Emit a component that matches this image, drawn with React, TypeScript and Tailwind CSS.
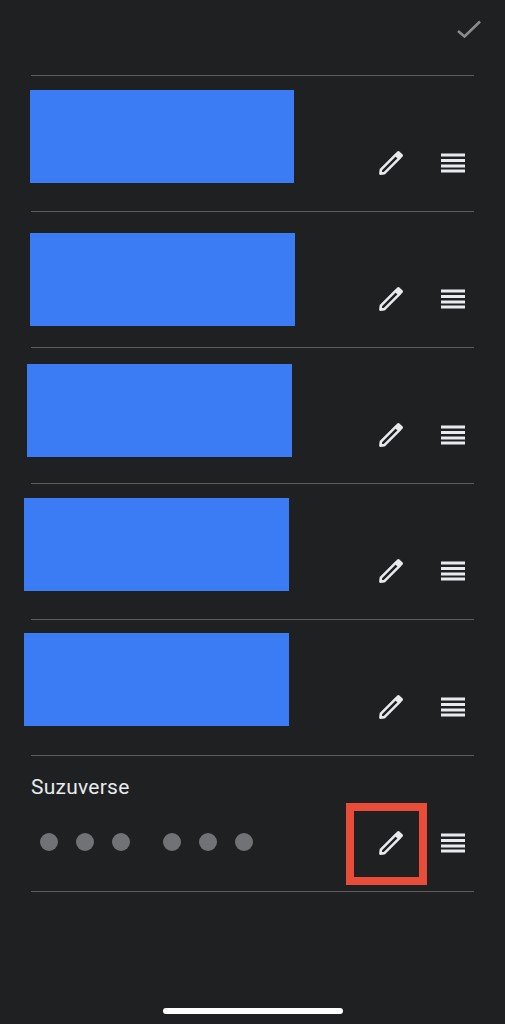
const PencilIcon = () => (
  <svg width="26" height="26" viewBox="0 0 26 26" fill="none" className="block">
    <path d="M2.4 23.6 L2.9 19.6 L17.6 4.8 L21.2 8.4 L6.4 23.1 Z" stroke="#e8eaed" strokeWidth="2.6" strokeLinejoin="round" />
    <path d="M17 3.8 L19.4 1.4 Q20.4 0.6 21.4 1.4 L24.6 4.6 Q25.4 5.6 24.6 6.6 L22.2 9 Z" fill="#e8eaed" />
  </svg>
);

const LinesIcon = () => (
  <svg width="24" height="20" viewBox="0 0 24 20" fill="#e8eaed" className="block">
    <rect x="0" y="0.5" width="24" height="3" />
    <rect x="0" y="6" width="24" height="3" />
    <rect x="0" y="11.5" width="24" height="3" />
    <rect x="0" y="16.5" width="24" height="3" />
  </svg>
);

// the blue boxes sit a bit differently in every row
const blueRows = [
  "w-[264px] ml-[-1px] mt-[14px]",
  "w-[265px] ml-[-1px] mt-[21px]",
  "w-[265px] ml-[-4px] mt-[16px]",
  "w-[265px] ml-[-7px] mt-[14px]",
  "w-[265px] ml-[-7px] mt-[13px]",
];

const Actions = ({ marked = false }: { marked?: boolean }) => (
  <div className="ml-auto flex items-center pr-[9px] h-[26px] self-start mt-[74px] gap-[37px]">
    <div className="relative">
      <PencilIcon />
      {marked && (
        <div className="absolute left-[-32px] top-[-27px] w-[81px] h-[82px] border-[8px] border-[#ea4c3a]" />
      )}
    </div>
    <LinesIcon />
  </div>
);

const Dot = () => <div className="w-[18px] h-[18px] rounded-full bg-[#717275]" />;

export default function App() {
  return (
    <div
      className="h-[1024px] w-full overflow-hidden flex flex-col bg-[#1f2022]"
      style={{ fontFamily: "Roboto, 'Liberation Sans', sans-serif" }}
    >
      <div className="h-[75px] flex justify-end items-start pt-[20px] pr-[24px] shrink-0">
        <svg width="24" height="18" viewBox="0 0 24 18" fill="none" className="block">
          <path d="M1 11 L7.5 16.5 L23 1.5" stroke="#8a8b8e" strokeWidth="2.6" />
        </svg>
      </div>

      <div className="ml-[31px] w-[443px] border-t border-[#5a5b5f]">
        {blueRows.map((cls) => (
          <div key={cls} className="flex h-[136px] border-b border-[#5a5b5f]">
            <div className={`h-[93px] bg-[#3b7cf5] shrink-0 ${cls}`} />
            <Actions />
          </div>
        ))}

        <div className="flex h-[136px] border-b border-[#5a5b5f]">
          <div className="flex flex-col">
            <div className="mt-[19px] text-[21px] leading-[24px] text-[#e8eaed] tracking-[0.25px]">Suzuverse</div>
            <div className="flex mt-[34px] ml-[9px] gap-[33px]">
              <div className="flex gap-[18px]">
                <Dot />
                <Dot />
                <Dot />
              </div>
              <div className="flex gap-[18px]">
                <Dot />
                <Dot />
                <Dot />
              </div>
            </div>
          </div>
          <Actions marked />
        </div>
      </div>

      <div className="mt-auto mb-[10px] self-center ml-[1px] w-[180px] h-[6px] rounded-full bg-white" />
    </div>
  );
}
